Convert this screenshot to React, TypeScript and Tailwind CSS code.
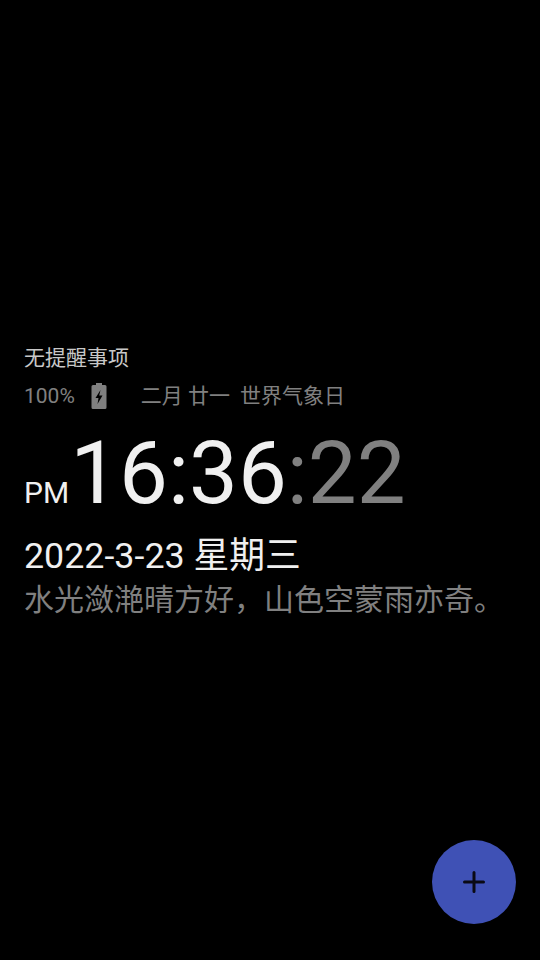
import React from "react";

const cjk = "font-['Roboto','Noto_Sans_CJK_SC',sans-serif]";

export default function App() {
  return (
    <div className={`relative flex h-[960px] w-[540px] flex-col overflow-hidden bg-black px-6 pt-[344px] ${cjk}`}>
      <div className="h-[29px] text-[21px] leading-[29px] text-[#c8c8c8]">无提醒事项</div>
      <div className="mt-[9px] flex h-[28px] items-center text-[21px] leading-[28px] text-[#808080]">
        <span>100%</span>
        <svg className="ml-[16px]" width="16" height="28" viewBox="0 0 16 28">
          <path d="M5 1h6v2h3a1.500 1.500 0 0 1 1.500 1.500v21a1.500 1.500 0 0 1-1.500 1.500H2a1.500 1.500 0 0 1-1.500-1.500v-21A1.500 1.500 0 0 1 2 3h3z" fill="#808080" />
          <path d="M9.500 8L4.500 16h3l-1 6 5-8.500H8.200z" fill="#000" />
        </svg>
        <span className="ml-[34px]">二月 廿一</span>
        <span className="ml-[10px]">世界气象日</span>
      </div>
      <div className="mt-[15px] flex h-[96px] items-baseline">
        <span className="text-[30px] leading-[96px] text-[#f0f0f0]">PM</span>
        <span className="ml-[1px] text-[87px] leading-[96px] text-[#f0f0f0]">16:36</span>
        <span className="text-[87px] leading-[96px] text-[#808080]">:22</span>
      </div>
      <div className="mt-[13px] text-[35.8px] leading-[44px] text-[#f0f0f0]">2022-3-23 星期三</div>
      <div className="text-[30px] leading-[44px] text-[#808080]">水光潋滟晴方好，山色空蒙雨亦奇。</div>
      <button className="absolute bottom-[36px] right-[24px] flex h-[84px] w-[84px] items-center justify-center rounded-full bg-[#3f51b5]">
        <svg width="22" height="22" viewBox="0 0 22 22">
          <path d="M11 1.500v19M1.500 11h19" stroke="#0a0a14" strokeWidth="3" strokeLinecap="round" />
        </svg>
      </button>
    </div>
  );
}
